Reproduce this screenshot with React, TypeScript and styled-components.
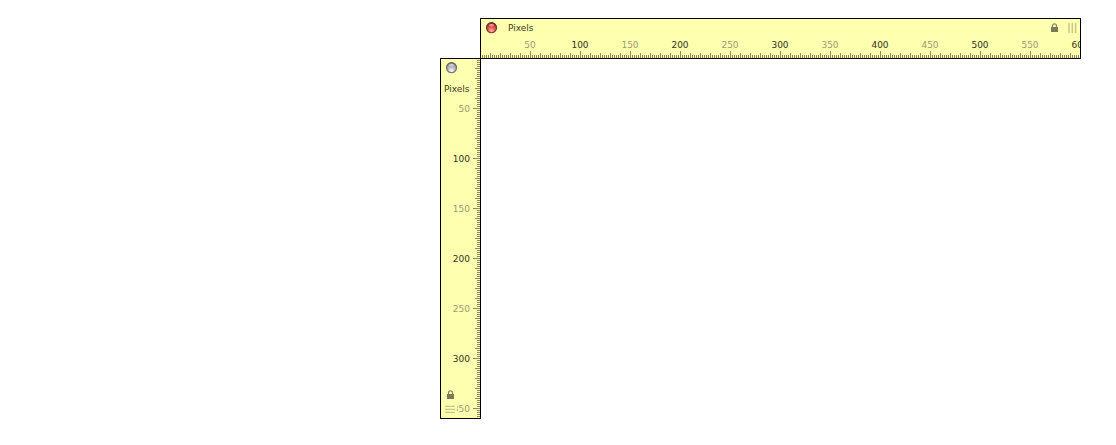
import React from "react";
import styled, { createGlobalStyle, css } from "styled-components";

type Axis = "x" | "y";

const PAPER = "#ffffb0";
const TICK = "#8a8a64";

const GlobalStyle = createGlobalStyle`
  body {
    margin: 0;
    background: #fff;
    font-family: "DejaVu Sans", sans-serif;
    font-size: 9px;
    line-height: 12px;
  }
`;

const Desk = styled.main`
  display: flex;
  flex-direction: column;
  padding: 18px 35px 26px 440px;
`;

/* Three layers of ticks: every 50, every 10 and every 2 pixels. */
const horizontalTicks = css`
  background-image:
    repeating-linear-gradient(to right, ${TICK} 0 1px, transparent 1px 50px),
    repeating-linear-gradient(to right, ${TICK} 0 1px, transparent 1px 10px),
    repeating-linear-gradient(to right, ${TICK} 0 1px, transparent 1px 2px);
  background-size: 4000px 7px, 4000px 5px, 4000px 3px;
  background-position: -1px 100%;
  background-repeat: no-repeat;
`;

const verticalTicks = css`
  background-image:
    repeating-linear-gradient(to bottom, ${TICK} 0 1px, transparent 1px 50px),
    repeating-linear-gradient(to bottom, ${TICK} 0 1px, transparent 1px 10px),
    repeating-linear-gradient(to bottom, ${TICK} 0 1px, transparent 1px 2px);
  background-size: 7px 4000px, 5px 4000px, 3px 4000px;
  background-position: 100% -1px;
  background-repeat: no-repeat;
`;

const HorizontalRuler = styled.section`
  display: grid;
  grid-template-rows: 18px 21px;
  margin-left: 40px;
  border: 1px solid #000;
  background-color: ${PAPER};
  overflow: hidden;
`;

const VerticalRuler = styled.section`
  display: grid;
  width: 39px;
  margin-top: -1px;
  border: 1px solid #000;
  background-color: ${PAPER};
  overflow: hidden;
`;

const TopBar = styled.header`
  display: flex;
  align-items: center;
  padding: 0 3px 0 4px;
`;

const SideBar = styled.header`
  display: flex;
  flex-direction: column;
  align-items: flex-start;
  grid-area: 1 / 1;
  z-index: 1;
  padding: 3px 3px 4px;
`;

const Unit = styled.span<{ $axis: Axis }>`
  color: #3c3c22;
  margin: ${(p) => (p.$axis === "x" ? "0 auto 0 10px" : "9px 0 auto")};
`;

const IconButton = styled.button<{ $opaque?: boolean }>`
  display: block;
  flex: none;
  padding: 0;
  border: 0;
  background: ${(p) => (p.$opaque ? PAPER : "transparent")};
  cursor: pointer;

  svg {
    display: block;
  }
`;

const TopTools = styled.div`
  display: flex;
  align-items: center;
  gap: 9px;
`;

const SideTools = styled.div`
  display: flex;
  flex-direction: column;
  align-items: flex-start;
  gap: 5px;
`;

const SideSlot = styled.div<{ $indent: number }>`
  padding-left: ${(p) => p.$indent}px;
`;

const HorizontalScale = styled.ol`
  display: flex;
  min-width: 0;
  margin: 0;
  padding: 2px 0 0 24px;
  list-style: none;
  overflow: hidden;
  ${horizontalTicks}
`;

const VerticalScale = styled.ol`
  grid-area: 1 / 1;
  height: 334px;
  margin: 0;
  padding: 25px 0 0;
  list-style: none;
  overflow: hidden;
  ${verticalTicks}
`;

const Mark = styled.li<{ $axis: Axis; $major: boolean }>`
  flex: none;
  box-sizing: border-box;
  color: ${(p) => (p.$major ? "#33331c" : "#9c9c70")};
  ${(p) =>
    p.$axis === "x"
      ? css`
          width: 50px;
          text-align: center;
        `
      : css`
          height: 50px;
          padding-right: 10px;
          line-height: 50px;
          text-align: right;
        `}
`;

function Orb({ id, tint }: { id: string; tint: "red" | "gray" }) {
  const red = tint === "red";
  return (
    <svg width="13" height="12" viewBox="0 0 13 12" aria-hidden="true">
      <defs>
        <radialGradient id={`${id}-body`} cx="50%" cy="85%" r="80%">
          <stop offset="0" stopColor={red ? "#ffb8a8" : "#ffffff"} />
          <stop offset="0.5" stopColor={red ? "#ea564e" : "#bcbcc0"} />
          <stop offset="1" stopColor={red ? "#a02420" : "#88888a"} />
        </radialGradient>
        <linearGradient id={`${id}-shine`} x1="0" y1="0" x2="0" y2="1">
          <stop offset="0" stopColor="#fff" stopOpacity="0.75" />
          <stop offset="1" stopColor="#fff" stopOpacity="0.1" />
        </linearGradient>
        <linearGradient id={`${id}-rim`} x1="0" y1="0" x2="0" y2="1">
          <stop offset="0" stopColor={red ? "#5a2a24" : "#5a5a5a"} />
          <stop offset="1" stopColor={red ? "#84443c" : "#7c7c78"} />
        </linearGradient>
      </defs>
      <circle cx="6.5" cy="5.7" r="5" fill={`url(#${id}-body)`} stroke={`url(#${id}-rim)`} strokeWidth="1.2" />
      <ellipse cx="6.5" cy="3.4" rx="2.6" ry="1.5" fill={`url(#${id}-shine)`} />
    </svg>
  );
}

function LockIcon() {
  return (
    <svg width="9" height="10" viewBox="0 0 9 10" aria-hidden="true">
      <path d="M2.5 5V2.8a2 2 0 0 1 4 0V5" fill="none" stroke="#84845e" strokeWidth="1.2" />
      <rect x="1" y="4" width="7" height="5" fill="#7a7a56" />
    </svg>
  );
}

function GripIcon({ axis }: { axis: Axis }) {
  return axis === "x" ? (
    <svg width="9" height="10" viewBox="0 0 9 10" aria-hidden="true">
      <path d="M1 0v10M4.3 0v10M7.6 0v10" stroke="#c6c68c" strokeWidth="1.5" />
    </svg>
  ) : (
    <svg width="13" height="9" viewBox="0 0 13 9" aria-hidden="true">
      <path d="M1 1.4h10M1 4.4h10M1 7.4h10" stroke="#c6c68c" strokeWidth="1.3" />
    </svg>
  );
}

function marks(axis: Axis, last: number) {
  const values = Array.from({ length: last / 50 }, (_, i) => (i + 1) * 50);
  return values.map((value) => (
    <Mark key={value} $axis={axis} $major={value % 100 === 0}>
      {value}
    </Mark>
  ));
}

export default function App() {
  return (
    <>
      <GlobalStyle />
      <Desk>
        <HorizontalRuler aria-label="Horizontal ruler">
          <TopBar>
            <IconButton type="button" aria-label="Close horizontal ruler">
              <Orb id="close-x" tint="red" />
            </IconButton>
            <Unit $axis="x">Pixels</Unit>
            <TopTools>
              <IconButton type="button" aria-label="Lock horizontal ruler">
                <LockIcon />
              </IconButton>
              <IconButton type="button" aria-label="Resize horizontal ruler">
                <GripIcon axis="x" />
              </IconButton>
            </TopTools>
          </TopBar>
          <HorizontalScale>{marks("x", 600)}</HorizontalScale>
        </HorizontalRuler>
        <VerticalRuler aria-label="Vertical ruler">
          <SideBar>
            <SideSlot $indent={1}>
              <IconButton type="button" aria-label="Close vertical ruler">
                <Orb id="close-y" tint="gray" />
              </IconButton>
            </SideSlot>
            <Unit $axis="y">Pixels</Unit>
            <SideTools>
              <SideSlot $indent={2}>
                <IconButton type="button" aria-label="Lock vertical ruler">
                  <LockIcon />
                </IconButton>
              </SideSlot>
              <IconButton type="button" $opaque aria-label="Resize vertical ruler">
                <GripIcon axis="y" />
              </IconButton>
            </SideTools>
          </SideBar>
          <VerticalScale>{marks("y", 350)}</VerticalScale>
        </VerticalRuler>
      </Desk>
    </>
  );
}
